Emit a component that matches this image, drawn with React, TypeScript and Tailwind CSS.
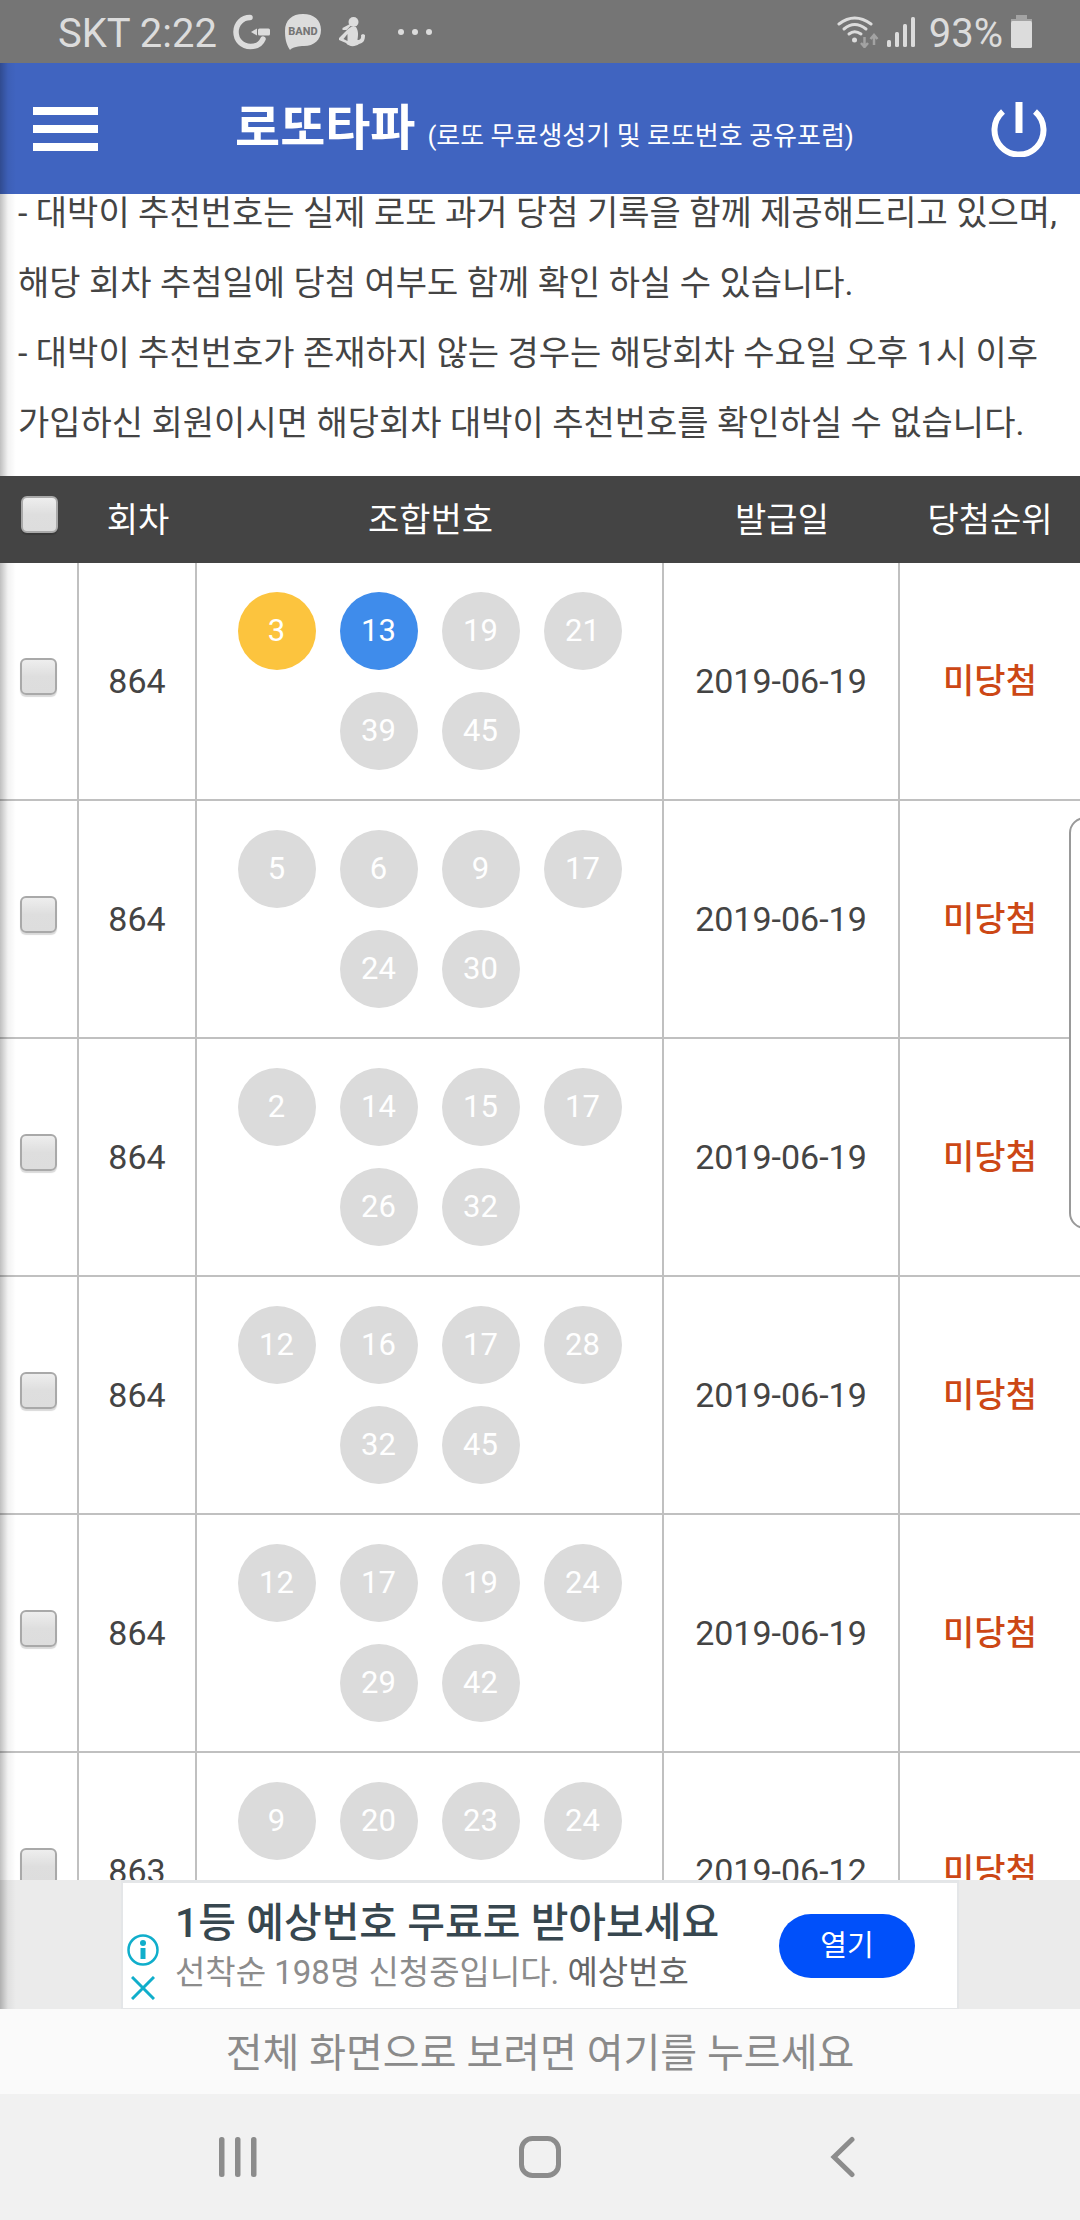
import { useState } from 'react';
import clsx from 'clsx';

interface Draw {
    id: number;
    round: number;
    numbers: number[];
    hits: number[];
    issuedAt: string;
    result: string;
}

const DRAWS: Draw[] = [
    { id: 1, round: 864, numbers: [3, 13, 19, 21, 39, 45], hits: [3, 13], issuedAt: '2019-06-19', result: '미당첨' },
    { id: 2, round: 864, numbers: [5, 6, 9, 17, 24, 30], hits: [], issuedAt: '2019-06-19', result: '미당첨' },
    { id: 3, round: 864, numbers: [2, 14, 15, 17, 26, 32], hits: [], issuedAt: '2019-06-19', result: '미당첨' },
    { id: 4, round: 864, numbers: [12, 16, 17, 28, 32, 45], hits: [], issuedAt: '2019-06-19', result: '미당첨' },
    { id: 5, round: 864, numbers: [12, 17, 19, 24, 29, 42], hits: [], issuedAt: '2019-06-19', result: '미당첨' },
    { id: 6, round: 863, numbers: [9, 20, 23, 24], hits: [], issuedAt: '2019-06-12', result: '미당첨' },
];

// 1-10 yellow, 11-20 blue, gray when the number did not hit
function ballColor(n: number, hit: boolean) {
    if (!hit) return 'bg-[#dbdbdb]';
    return n <= 10 ? 'bg-[#fcc43e]' : 'bg-[#3f8ceb]';
}

function Ball({ n, hit }: { n: number; hit: boolean }) {
    return (
        <span
            className={clsx(
                'flex size-[78px] items-center justify-center rounded-full pb-0.5 text-[31px] leading-none text-white',
                ballColor(n, hit)
            )}
        >
            {n}
        </span>
    );
}

interface CheckProps {
    label: string;
    checked: boolean;
    onChange: () => void;
}

function Check({ label, checked, onChange }: CheckProps) {
    return (
        <input
            type="checkbox"
            aria-label={label}
            checked={checked}
            onChange={onChange}
            className="mx-auto mb-2.5 block size-[37px] appearance-none rounded-md border-2 border-[#a9a9a9] bg-linear-to-b from-[#eeeeee] via-[#dedede] to-[#dddddd] shadow-[0_2px_1px_rgba(0,0,0,0.15)] checked:bg-[#3f8ceb]"
        />
    );
}

function StatusBar() {
    return (
        <div className="flex h-[63px] shrink-0 items-center justify-between bg-[#757575] pl-[58px] pr-12 text-[40px] leading-none text-[#dcdcdc]">
            <div className="flex items-center">
                <span className="pt-1">SKT 2:22</span>
                <svg className="ml-4 h-9 w-[38px]" viewBox="0 0 38 36" fill="none">
                    <path d="M17 3.500C9 3.500 3 10 3 18S9 32.500 17.500 32.500C23.500 32.500 28 30 30 25" stroke="#dcdcdc" strokeWidth="5.500" strokeLinecap="round" />
                    <path d="M18 18l6-3.500v7z" fill="#dcdcdc" />
                    <rect x="25" y="14.500" width="12" height="7" rx="1.500" fill="#dcdcdc" />
                </svg>
                <svg className="ml-3.5 h-9 w-9" viewBox="0 0 36 36">
                    <path d="M18 0C29 0 36 6 36 16s-7 16-17 16c-3 0-5 0-8 1-3 .500-5 1.500-6 3C1 30 0 24 0 17 0 6 7 0 18 0z" fill="#dcdcdc" />
                    <text x="18" y="21" textAnchor="middle" fontSize="11" fontWeight="800" fontFamily="Roboto, sans-serif" fill="#757575">BAND</text>
                </svg>
                <svg className="ml-[18px] h-8 w-[27px]" viewBox="0 0 27 32" fill="#dcdcdc">
                    <circle cx="14.500" cy="6" r="5" />
                    <path d="M11 8L3.500 12l0 2h4l4-4z" />
                    <path d="M12 11h5c3 5 2 9 1.500 13 3 0 4-2 3.500-5l2-1 2 1c0 6-2 8-6 9-4 3-10 3-13-1L0 24v-2l9-9z" />
                    <path d="M8.500 18l-4 5 4 2z" fill="#757575" />
                </svg>
                <svg className="ml-8 h-2 w-[34px]" viewBox="0 0 34 8" fill="#dcdcdc">
                    <circle cx="3" cy="4" r="3" />
                    <circle cx="17" cy="4" r="3" />
                    <circle cx="31" cy="4" r="3" />
                </svg>
            </div>
            <div className="flex items-center">
                <svg className="h-8 w-[42px]" viewBox="0 0 42 32" fill="none">
                    <g stroke="#dcdcdc" strokeWidth="3" strokeLinecap="round">
                        <path d="M2 8Q17.500-4 34 8" />
                        <path d="M7 13Q17.500 4 29 13" />
                        <path d="M12 18Q17.500 13.500 24 18" />
                    </g>
                    <circle cx="17.500" cy="24" r="2.500" fill="#dcdcdc" />
                    <path d="M27.500 21v9M24 27l3.500 4 3.500-4M37 29v-9M33.500 23l3.500-4 3.500 4" stroke="#a3a3a3" strokeWidth="2.500" />
                </svg>
                <svg className="ml-2 h-[30px] w-7" viewBox="0 0 28 30" fill="#dcdcdc">
                    <rect x="0" y="23" width="4" height="7" rx="1.500" />
                    <rect x="8" y="15" width="4" height="15" rx="1.500" />
                    <rect x="16" y="7" width="4" height="23" rx="1.500" />
                    <rect x="24" y="0" width="4" height="30" rx="1.500" />
                </svg>
                <span className="ml-3.5 pt-1">93%</span>
                <svg className="ml-2 h-[33px] w-[21px]" viewBox="0 0 21 33">
                    <path d="M5 0h11v4h5v3H0V4h5z" fill="#a3a3a3" />
                    <rect y="6" width="21" height="27" rx="1.500" fill="#dcdcdc" />
                </svg>
            </div>
        </div>
    );
}

function Header() {
    return (
        <header className="flex h-[131px] shrink-0 items-center justify-between bg-[#4064c0] px-[33px] text-white">
            <button type="button" aria-label="메뉴" className="flex w-[65px] flex-col gap-2.5">
                <span className="h-2 w-full bg-white" />
                <span className="h-2 w-full bg-white" />
                <span className="h-2 w-full bg-white" />
            </button>
            <h1 className="flex items-baseline gap-3 whitespace-nowrap text-[49px] font-bold">
                로또타파
                <span className="text-[26px] font-normal">(로또 무료생성기 및 로또번호 공유포럼)</span>
            </h1>
            <button type="button" aria-label="로그아웃">
                <svg className="size-14" viewBox="0 0 56 56" fill="none" stroke="#fff" strokeWidth="6">
                    <path d="M12 10.500A24.500 24.500 0 1 0 44 10.500" />
                    <path d="M28 1v31" strokeWidth="7" />
                </svg>
            </button>
        </header>
    );
}

function AdBanner() {
    return (
        <aside className="flex h-[129px] shrink-0 justify-center bg-[#ebebeb]">
            <div className="flex w-[838px] items-center border-2 border-t-[3px] border-b border-[#e4e6e8] bg-white pl-1 pr-[42px]">
                <div className="flex flex-col items-center gap-2.5 self-end pb-2">
                    <button type="button" aria-label="광고 정보">
                        <svg className="size-8" viewBox="0 0 32 32" fill="#10aecb">
                            <circle cx="16" cy="16" r="14.500" fill="none" stroke="#10aecb" strokeWidth="2.500" />
                            <circle cx="16" cy="9" r="3" />
                            <rect x="13.500" y="14" width="5" height="11" />
                        </svg>
                    </button>
                    <button type="button" aria-label="광고 닫기">
                        <svg className="size-6" viewBox="0 0 24 24" stroke="#10aecb" strokeWidth="3">
                            <path d="M1 1l22 22M23 1L1 23" />
                        </svg>
                    </button>
                </div>
                <div className="ml-4 flex-1 whitespace-nowrap">
                    <p className="text-[41px] font-medium leading-[54px] text-[#37474f]">1등 예상번호 무료로 받아보세요</p>
                    <p className="text-[33px] leading-[46px] text-[#8c8c8c]">
                        선착순 198명 신청중입니다. <span className="text-[#666666]">예상번호</span>
                    </p>
                </div>
                <button type="button" className="h-16 w-[136px] rounded-full bg-[#0050fa] pt-0.5 text-[29px] leading-none text-white">
                    열기
                </button>
            </div>
        </aside>
    );
}

function NavBar() {
    return (
        <nav className="flex h-[126px] shrink-0 items-center justify-center gap-[260px] bg-[#f1f1f1]">
            <button type="button" aria-label="최근 앱">
                <svg className="size-[42px]" viewBox="0 0 42 42" fill="#8c8c8c">
                    <rect x="2" y="1" width="5.500" height="40" rx="2.500" />
                    <rect x="18" y="1" width="5.500" height="40" rx="2.500" />
                    <rect x="34" y="1" width="5.500" height="40" rx="2.500" />
                </svg>
            </button>
            <button type="button" aria-label="홈">
                <svg className="size-[42px]" viewBox="0 0 42 42" fill="none" stroke="#8c8c8c" strokeWidth="5">
                    <rect x="2.500" y="2.500" width="37" height="37" rx="11" />
                </svg>
            </button>
            <button type="button" aria-label="뒤로">
                <svg className="size-[42px]" viewBox="0 0 42 42" fill="none" stroke="#8c8c8c" strokeWidth="5" strokeLinecap="round">
                    <path d="M31 3.500L13 21l18 17.500" />
                </svg>
            </button>
        </nav>
    );
}

export default function App() {
    const [selected, setSelected] = useState<number[]>([]);
    const allSelected = selected.length === DRAWS.length;

    const toggle = (id: number) => {
        setSelected(selected.includes(id) ? selected.filter((s) => s !== id) : [...selected, id]);
    };

    return (
        <div className="flex h-screen flex-col overflow-hidden bg-white font-['Roboto','Noto_Sans_CJK_KR',sans-serif] text-[#444444]">
            <StatusBar />
            <div className="relative flex min-h-0 flex-1 flex-col">
                <Header />
                <main className="min-h-0 flex-1 overflow-hidden">
                    <div className="-mt-4 break-keep px-[18px] pb-[18px] text-[34px] leading-[70px]">
                        <p>- 대박이 추천번호는 실제 로또 과거 당첨 기록을 함께 제공해드리고 있으며, 해당 회차 추첨일에 당첨 여부도 함께 확인 하실 수 있습니다.</p>
                        <p>- 대박이 추천번호가 존재하지 않는 경우는 해당회차 수요일 오후 1시 이후 가입하신 회원이시면 해당회차 대박이 추천번호를 확인하실 수 없습니다.</p>
                    </div>
                    <table className="w-full table-fixed border-separate border-spacing-0 text-center text-[34px] leading-none">
                        <thead className="relative z-10">
                            <tr className="h-[87px] bg-[#444444] text-white">
                                <th className="w-[79px] p-0">
                                    <Check
                                        label="전체 선택"
                                        checked={allSelected}
                                        onChange={() => setSelected(allSelected ? [] : DRAWS.map((d) => d.id))}
                                    />
                                </th>
                                <th className="w-[118px] p-0 font-normal">회차</th>
                                <th className="p-0 font-normal">조합번호</th>
                                <th className="w-[236px] p-0 font-normal">발급일</th>
                                <th className="w-[180px] p-0 font-normal">당첨순위</th>
                            </tr>
                        </thead>
                        <tbody>
                            {DRAWS.map((draw) => (
                                <tr key={draw.id} className="h-[238px] *:border-b-2 *:border-[#c0c0c0] *:p-0 [&>*:not(:last-child)]:border-r-2">
                                    <td>
                                        <Check
                                            label={`${draw.round}회 ${draw.numbers.join(', ')}`}
                                            checked={selected.includes(draw.id)}
                                            onChange={() => toggle(draw.id)}
                                        />
                                    </td>
                                    <td>{draw.round}</td>
                                    <td className="align-top">
                                        <div className="flex flex-wrap justify-center gap-x-6 gap-y-[22px] pt-[29px]">
                                            {draw.numbers.map((n) => (
                                                <Ball key={n} n={n} hit={draw.hits.includes(n)} />
                                            ))}
                                        </div>
                                    </td>
                                    <td>{draw.issuedAt}</td>
                                    <td className="font-medium text-[#cc4715]">{draw.result}</td>
                                </tr>
                            ))}
                        </tbody>
                    </table>
                </main>
                <AdBanner />
                {/* drawer shadow along the left edge */}
                <div className="pointer-events-none absolute inset-y-0 left-0 w-4 bg-linear-to-r from-black/25 via-black/5 to-transparent" />
                {/* edge panel handle */}
                <div className="absolute -right-2 top-[754px] h-[412px] w-[19px] rounded-l-2xl border-2 border-[#999999] bg-white" />
            </div>
            <button type="button" className="h-[85px] shrink-0 bg-[#fafafa] pt-1 text-[40px] leading-none text-[#8a8a8a]">
                전체 화면으로 보려면 여기를 누르세요
            </button>
            <NavBar />
        </div>
    );
}
